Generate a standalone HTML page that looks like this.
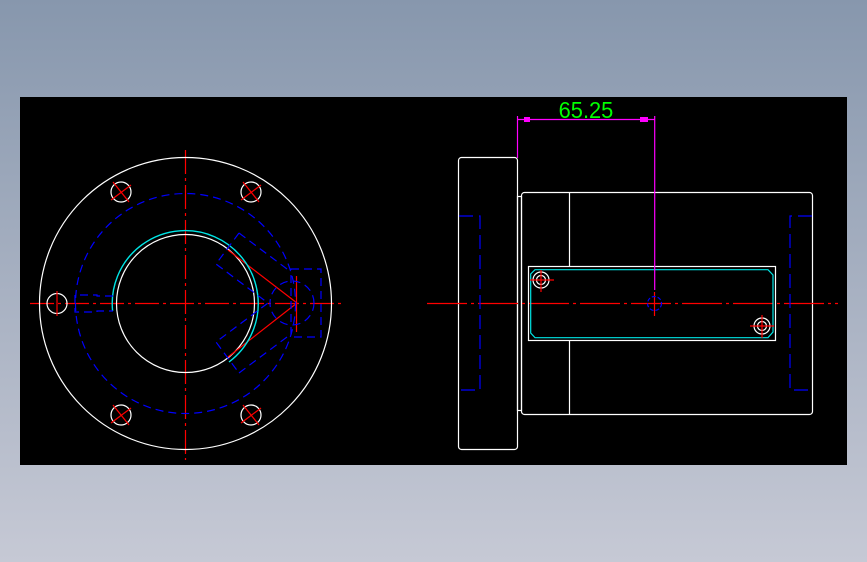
<!DOCTYPE html>
<html><head><meta charset="utf-8"><style>
html,body{margin:0;padding:0}
body{width:867px;height:562px;overflow:hidden;background:linear-gradient(#8797ad,#c6c9d5)}
svg{position:absolute;left:0;top:0}
</style></head><body>
<svg width="867" height="562" viewBox="0 0 867 562" fill="none" stroke-width="1.2">
<rect x="20" y="97" width="827" height="368" fill="#000"/>
<!-- left view -->
<g stroke="#ff0000" stroke-dasharray="24 4 3 4">
<line x1="30" y1="303.5" x2="343" y2="303.5"/>
<line x1="185.5" y1="150" x2="185.5" y2="460"/>
</g>
<g stroke="#fff">
<circle cx="185.5" cy="303.5" r="146"/>
<circle cx="185.5" cy="303.5" r="69"/>
<circle cx="121" cy="192" r="10"/><circle cx="251" cy="192" r="10"/>
<circle cx="121" cy="415" r="10"/><circle cx="251" cy="415" r="10"/>
<circle cx="57" cy="303.5" r="10"/>
</g>
<g stroke="#ff0000">
<line x1="113" y1="182" x2="129" y2="202"/><line x1="111" y1="200" x2="131" y2="185"/>
<line x1="243" y1="182" x2="259" y2="202"/><line x1="241" y1="200" x2="261" y2="185"/>
<line x1="113" y1="405" x2="129" y2="425"/><line x1="111" y1="423" x2="131" y2="408"/>
<line x1="243" y1="405" x2="259" y2="425"/><line x1="241" y1="423" x2="261" y2="408"/>
<line x1="57" y1="291" x2="57" y2="316"/>
<line x1="228" y1="250" x2="297" y2="303"/><line x1="228" y1="357" x2="297" y2="303"/>
<line x1="296.5" y1="276" x2="296.5" y2="332"/>
</g>
<path d="M112.6,311 A73,73 0 1 1 229,362" stroke="#00e5e5" stroke-width="1.4"/>
<g stroke="#0000ff" stroke-dasharray="8 5">
<circle cx="185.5" cy="303.5" r="110"/>
<circle cx="292" cy="303" r="22"/>
<rect x="291" y="269" width="30" height="68"/>
<polyline points="239,233 216,264 268,303 216,342 239,373"/>
<line x1="239" y1="233" x2="291" y2="272"/><line x1="239" y1="373" x2="291" y2="334"/>
<polyline points="113,296 97,296 97,295 75,295 75,312 97,312 97,311 113,311"/>
</g>
<!-- right view -->
<g stroke="#fff">
<rect x="458.5" y="157.5" width="59" height="292" rx="3"/>
<rect x="517.5" y="196.5" width="4" height="214"/>
<rect x="521.5" y="192.5" width="291" height="222" rx="3"/>
<line x1="569.5" y1="192.5" x2="569.5" y2="266"/><line x1="569.5" y1="340" x2="569.5" y2="414"/>
<rect x="528.5" y="266.5" width="247" height="74" fill="#000"/>
<circle cx="541" cy="280" r="8"/><circle cx="541" cy="280" r="4.5"/>
<circle cx="762" cy="326" r="8"/><circle cx="762" cy="326" r="4.5"/>
</g>
<line x1="427" y1="303.5" x2="838" y2="303.5" stroke="#ff0000" stroke-dasharray="40 4 3 4"/>
<polygon points="535,269.7 768,269.7 773,275 773,332 768,337.7 535,337.7 530.7,333 530.7,274" stroke="#00e5e5"/>
<g stroke="#ff0000">
<line x1="530" y1="280" x2="554" y2="280"/><line x1="541" y1="270" x2="541" y2="292"/>
<line x1="750" y1="326" x2="774" y2="326"/><line x1="762" y1="315" x2="762" y2="338"/>
<line x1="654.5" y1="292" x2="654.5" y2="316"/>
</g>
<circle cx="654.5" cy="303.5" r="7" stroke="#0000ff" stroke-dasharray="4 2"/>
<g stroke="#0000ff" stroke-dasharray="14 6">
<polyline points="459,216 480,216 480,390 459,390"/>
<polyline points="812,216 790,216 790,390 812,390"/>
</g>
<g stroke="#ff00ff">
<line x1="517.5" y1="116" x2="517.5" y2="158"/>
<line x1="654.7" y1="116" x2="654.7" y2="290"/>
<line x1="517.5" y1="119.5" x2="654.7" y2="119.5"/>
</g>
<rect x="524" y="117" width="6" height="5" fill="#ff00ff"/>
<rect x="640" y="117" width="8" height="5" fill="#ff00ff"/>
<text x="586" y="118" fill="#00ff00" font-family="Liberation Sans, sans-serif" font-size="23" text-anchor="middle" transform="translate(586 0) scale(0.95 1) translate(-586 0)">65.25</text>
</svg>
</body></html>
